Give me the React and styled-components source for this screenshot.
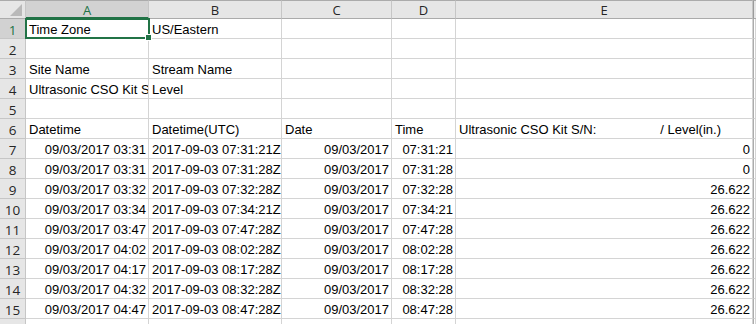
import React from 'react';
import styled, { createGlobalStyle } from 'styled-components';

const GlobalStyle = createGlobalStyle`
  html, body {
    margin: 0;
    padding: 0;
    background: #ffffff;
  }
`;

const columns = [
  { key: 'A', width: 123 },
  { key: 'B', width: 133 },
  { key: 'C', width: 110 },
  { key: 'D', width: 64 },
  { key: 'E', width: 297 },
];

const times = [
  ['03:31', '07:31:21', '0'],
  ['03:31', '07:31:28', '0'],
  ['03:32', '07:32:28', '26.622'],
  ['03:34', '07:34:21', '26.622'],
  ['03:47', '07:47:28', '26.622'],
  ['04:02', '08:02:28', '26.622'],
  ['04:17', '08:17:28', '26.622'],
  ['04:32', '08:32:28', '26.622'],
  ['04:47', '08:47:28', '26.622'],
];

// each row: list of [text, align, second part]
const rows = [
  [['Time Zone'], ['US/Eastern'], [], [], []],
  [[], [], [], [], []],
  [['Site Name'], ['Stream Name'], [], [], []],
  [['Ultrasonic CSO Kit S/N:'], ['Level'], [], [], []],
  [[], [], [], [], []],
  [['Datetime'], ['Datetime(UTC)'], ['Date'], ['Time'], ['Ultrasonic CSO Kit S/N:', 'left', '/ Level(in.)']],
  ...times.map(([hm, utc, val]) => [
    ['09/03/2017 ' + hm, 'right'],
    ['2017-09-03 ' + utc + 'Z'],
    ['09/03/2017', 'right'],
    [utc, 'right'],
    [val, 'right'],
  ]),
  [[], [], [], [], []],
];

const App = () => (
  <>
    <GlobalStyle />
    <Sheet>
      <Grid>
        <Corner>
          <svg width="12" height="12" viewBox="0 0 12 12">
            <polygon points="12,0 12,12 0,12" fill="#b9b9b9" />
          </svg>
        </Corner>
        {columns.map(col => (
          <ColHeader key={col.key} $active={col.key === 'A'}>{col.key}</ColHeader>
        ))}
        <ColHeader $edge />
        {rows.map((row, r) => (
          <React.Fragment key={r}>
            {/* last row is only partly in view, its number sits below the edge */}
            <RowHeader $active={r === 0}>{r < rows.length - 1 ? r + 1 : ''}</RowHeader>
            {row.map(([text, align, extra], c) => (
              <Cell key={c} $align={align}>
                {text}
                {extra && <Gap>{extra}</Gap>}
              </Cell>
            ))}
            <EdgeCell />
          </React.Fragment>
        ))}
      </Grid>
      <Selection>
        <Handle />
      </Selection>
    </Sheet>
  </>
);

const Sheet = styled.div`
  position: relative;
  width: 756px;
  height: 324px;
  overflow: hidden;
  background: #ffffff;
`;

const Grid = styled.div`
  display: grid;
  grid-template-columns: 26px 123px 133px 110px 64px 297px 1fr;
  grid-template-rows: 19px repeat(16, 20px);
  font-family: "Liberation Sans", Arial, sans-serif;
  font-size: 13px;
  color: #000000;
`;

const Corner = styled.div`
  box-sizing: border-box;
  display: flex;
  align-items: flex-end;
  justify-content: flex-end;
  padding: 0 3px 2px 0;
  background: #e6e6e6;
  border-top: 1px solid #ababab;
  border-right: 1px solid #c6c6c6;
  border-bottom: 1px solid #ababab;
`;

const ColHeader = styled.div`
  box-sizing: border-box;
  display: flex;
  align-items: center;
  justify-content: center;
  font-family: "Open Sans", "Noto Sans", sans-serif;
  font-size: 13px;
  padding-top: 1px;
  color: ${p => (p.$active ? '#217346' : '#262626')};
  background: ${p => (p.$active ? '#d2d2d2' : '#e6e6e6')};
  border-top: 1px solid #ababab;
  border-right: ${p => (p.$edge ? '0' : '1px')} solid #c6c6c6;
  border-bottom: ${p => (p.$active ? '2px solid #217346' : '1px solid #ababab')};
  ${p => p.$edge && 'border-left: 1px solid #9b9b9b;'}
`;

const RowHeader = styled.div`
  box-sizing: border-box;
  display: flex;
  align-items: center;
  justify-content: center;
  padding-top: 3px;
  font-family: "Open Sans", "Noto Sans", sans-serif;
  font-size: 13.5px;
  line-height: 16px;
  color: ${p => (p.$active ? '#217346' : '#262626')};
  background: ${p => (p.$active ? '#d2d2d2' : '#e6e6e6')};
  border-right: 1px solid #c6c6c6;
  border-bottom: 1px solid #c6c6c6;
`;

const Cell = styled.div`
  box-sizing: border-box;
  display: flex;
  align-items: flex-end;
  justify-content: ${p => (p.$align === 'right' ? 'flex-end' : 'flex-start')};
  padding: 0 2px 1px 3px;
  line-height: 14px;
  white-space: pre;
  overflow: hidden;
  border-right: 1px solid #d4d4d4;
  border-bottom: 1px solid #d4d4d4;
`;

const Gap = styled.span`
  padding-left: 64px;
`;

const EdgeCell = styled.div`
  box-sizing: border-box;
  border-left: 1px solid #ababab;
  border-right: 1px solid #d4d4d4;
  border-bottom: 1px solid #d4d4d4;
`;

const Selection = styled.div`
  position: absolute;
  left: 25px;
  top: 18px;
  width: 125px;
  height: 21px;
  box-sizing: border-box;
  border: 2px solid #217346;
  pointer-events: none;
`;

const Handle = styled.div`
  position: absolute;
  right: -4px;
  bottom: -4px;
  width: 5px;
  height: 5px;
  background: #217346;
  border: 1px solid #ffffff;
`;

export default App;
